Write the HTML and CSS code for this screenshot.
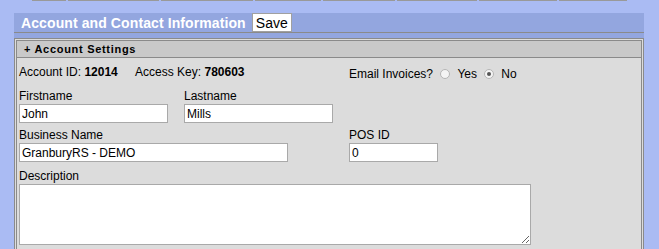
FILE: index.html
```html
<!DOCTYPE html>
<html lang="en">
<head>
  <meta charset="UTF-8">
  <title>Account and Contact Information</title>
  <link rel="stylesheet" href="styles.css">
</head>
<body>

<div class="tabs">
  <span class="tab t1"></span>
  <span class="tab t2"></span>
  <span class="tab t3"></span>
  <span class="tab t4"></span>
  <span class="tab t5"></span>
  <span class="tab t6"></span>
  <span class="tab t7"></span>
  <span class="tab t8"></span>
</div>

<div class="panel">
  <div class="panel-head">
    <span class="title">Account and Contact Information</span>
    <button type="button" class="save">Save</button>
  </div>
  <div class="panel-body">
    <div class="section">
      <div class="section-head">+ Account Settings</div>
      <div class="section-body">
        <div class="row info">
          <div class="col-wide">
            Account ID: <b>12014</b>
            <span class="key">Access Key: <b>780603</b></span>
          </div>
          <div class="email">
            Email Invoices?
            <input type="radio" name="inv" class="radio" id="invYes"><label for="invYes">Yes</label>
            <input type="radio" name="inv" class="radio" id="invNo" checked><label for="invNo">No</label>
          </div>
        </div>

        <div class="row">
          <div class="field col">
            <label for="first">Firstname</label>
            <input type="text" id="first" class="w-name" value="John">
          </div>
          <div class="field col">
            <label for="last">Lastname</label>
            <input type="text" id="last" class="w-name" value="Mills">
          </div>
        </div>

        <div class="row spaced">
          <div class="field col-wide">
            <label for="business">Business Name</label>
            <input type="text" id="business" class="w-business" value="GranburyRS - DEMO">
          </div>
          <div class="field">
            <label for="pos">POS ID</label>
            <input type="text" id="pos" class="w-pos" value="0">
          </div>
        </div>

        <div class="row">
          <div class="field">
            <label for="desc">Description</label>
            <textarea id="desc"></textarea>
          </div>
        </div>
      </div>
    </div>
  </div>
</div>

</body>
</html>
```

FILE: styles.css
```css
body {
  margin: 0;
  background: #aabbf3;
  font-family: Arial, "Liberation Sans", sans-serif;
  font-size: 12px;
  color: #000;
}
.tabs {
  display: flex;
  gap: 2px;
  height: 1px;
  padding-left: 32px;
}
.tab {
  height: 1px;
  background: #999;
}
.t1 { width: 34px; }
.t2 { width: 91px; }
.t3 { width: 92px; }
.t4 { width: 66px; }
.t5 { width: 72px; }
.t6 { width: 80px; }
.t7 { width: 78px; }
.t8 { width: 68px; }

.panel {
  margin: 12px 0 0 14px;
  width: 630px;
  background: #93a6df;
}
.panel-head {
  display: flex;
  align-items: center;
  height: 19px;
  padding-left: 7px;
  border-bottom: 1px solid #8a8a8a;
}
.title {
  color: #fff;
  font-weight: bold;
  font-size: 14px;
  letter-spacing: 0.1px;
}
.save {
  margin-left: 6px;
  width: 40px;
  height: 19px;
  padding: 0;
  border: 1px solid #a0a0a0;
  background: #fff;
  color: #000;
  font-family: Arial, "Liberation Sans", sans-serif;
  font-size: 14px;
}
.panel-body {
  margin-top: 5px;
  border: 1px solid #8a8a8a;
  padding: 1px;
  background: #dcdcdc;
}
.section {
  border: 1px solid #8a8a8a;
}
.section-head {
  height: 16px;
  line-height: 16px;
  padding-left: 7px;
  background: #c9c9c9;
  border-bottom: 1px solid #8a8a8a;
  font-weight: bold;
  font-size: 11px;
  letter-spacing: 0.7px;
}
.section-body {
  padding: 7px 0 2px 2px;
}
.row {
  display: flex;
  margin-bottom: 5px;
}
.row.spaced { margin-bottom: 7px; }
.row.info {
  align-items: flex-start;
  height: 15px;
  line-height: 15px;
  margin-bottom: 9px;
}
.col { width: 165px; }
.col-wide { width: 330px; }
.key { margin-left: 14px; }
.email { padding-top: 2px; }
.radio {
  appearance: none;
  -webkit-appearance: none;
  box-sizing: border-box;
  width: 10px;
  height: 10px;
  margin: 0 7px 0 4px;
  border: 1px solid #b5b5b5;
  border-radius: 50%;
  background: #f4f4f4;
  vertical-align: -1px;
  position: relative;
}
.radio:checked::after {
  content: "";
  position: absolute;
  left: 2px;
  top: 2px;
  width: 4px;
  height: 4px;
  border-radius: 50%;
  background: #555;
}
.field label {
  display: block;
  line-height: 15px;
}
input[type="text"], textarea {
  display: block;
  box-sizing: border-box;
  height: 19px;
  margin: 0;
  padding: 0 2px;
  border: 1px solid #a9a9a9;
  background: #fff;
  color: #000;
  font-family: Arial, "Liberation Sans", sans-serif;
  font-size: 12px;
}
.w-name { width: 149px; }
.w-business { width: 269px; }
.w-pos { width: 89px; }
textarea {
  width: 512px;
  height: 61px;
}
```
